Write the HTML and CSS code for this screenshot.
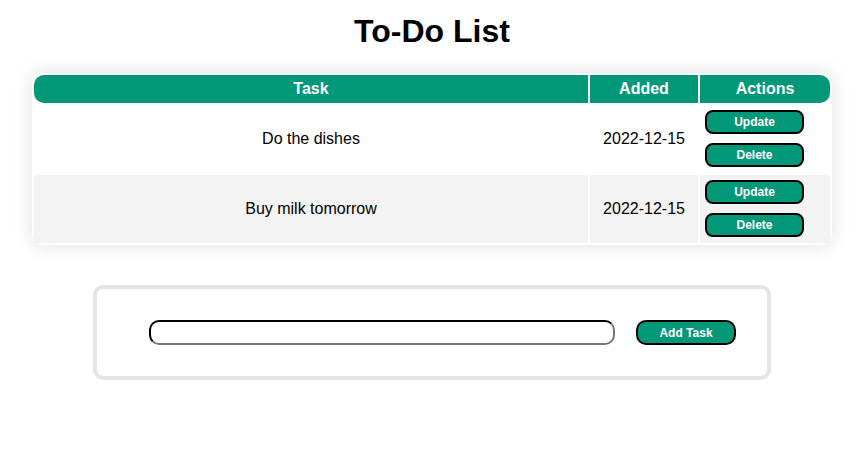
FILE: index.html
```html
<!DOCTYPE html>
<html lang="en">
<head>
<meta charset="utf-8">
<title>To-Do List</title>
<link rel="stylesheet" href="styles.css">
</head>
<body>
<main class="page">
  <h1 class="title">To-Do List</h1>
  <table class="todo-table">
    <thead>
      <tr>
        <th class="col-task">Task</th>
        <th class="col-added">Added</th>
        <th class="col-actions">Actions</th>
      </tr>
    </thead>
    <tbody>
      <tr>
        <td class="cell-task">Do the dishes</td>
        <td class="cell-added">2022-12-15</td>
        <td class="cell-actions">
          <button class="btn">Update</button>
          <button class="btn btn-second">Delete</button>
        </td>
      </tr>
      <tr class="row-alt">
        <td class="cell-task">Buy milk tomorrow</td>
        <td class="cell-added">2022-12-15</td>
        <td class="cell-actions">
          <button class="btn">Update</button>
          <button class="btn btn-second">Delete</button>
        </td>
      </tr>
    </tbody>
  </table>
  <form class="add-form">
    <input class="task-input" type="text">
    <button class="btn btn-add" type="button">Add Task</button>
  </form>
</main>
</body>
</html>
```
FILE: styles.css
```css
html, body {
  margin: 0;
  padding: 0;
  background: #ffffff;
}
body {
  font-family: "Liberation Sans", Arial, sans-serif;
  color: #000;
}
.page {
  width: 864px;
  display: flex;
  flex-direction: column;
  align-items: center;
}
.title {
  font-size: 32px;
  font-weight: bold;
  margin: 13px 0 23px;
  line-height: 37px;
}
.todo-table {
  width: 800px;
  border-spacing: 2px;
  background: #fff;
  border-radius: 10px;
  box-shadow: 0 0 20px rgba(0, 0, 0, 0.13);
  font-size: 16px;
}
.todo-table th {
  background: #009879;
  color: #fff;
  font-weight: bold;
  height: 28px;
  padding: 0;
  font-size: 16px;
}
.col-task {
  border-radius: 10px 0 0 10px;
}
.col-added {
  width: 108px;
}
.col-actions {
  width: 130px;
  border-radius: 0 10px 10px 0;
}
.todo-table td {
  padding: 0;
  text-align: center;
}
.row-alt td {
  background: #f3f3f3;
}
.cell-actions {
  padding: 5px 6px 6px 5px !important;
  text-align: left !important;
}
.btn {
  display: block;
  width: 99px;
  height: 24px;
  background: #009879;
  color: #fff;
  border: 2px solid #000;
  border-radius: 8px;
  font-family: "Liberation Sans", Arial, sans-serif;
  font-weight: bold;
  font-size: 12px;
  padding: 0;
}
.btn-second {
  margin-top: 9px;
}
.add-form {
  box-sizing: border-box;
  width: 678px;
  height: 95px;
  margin-top: 40px;
  border: 4px solid #e5e5e5;
  border-radius: 10px;
  display: flex;
  align-items: center;
  padding-left: 52px;
  gap: 21px;
}
.task-input {
  box-sizing: border-box;
  width: 466px;
  height: 25px;
  border: 2px inset #767676;
  border-top-color: #111;
  border-left-color: #111;
  border-radius: 10px;
  padding: 0 6px;
  margin: 0;
}
.btn-add {
  display: block;
  width: 100px;
  height: 25px;
  border-radius: 10px;
}
```
